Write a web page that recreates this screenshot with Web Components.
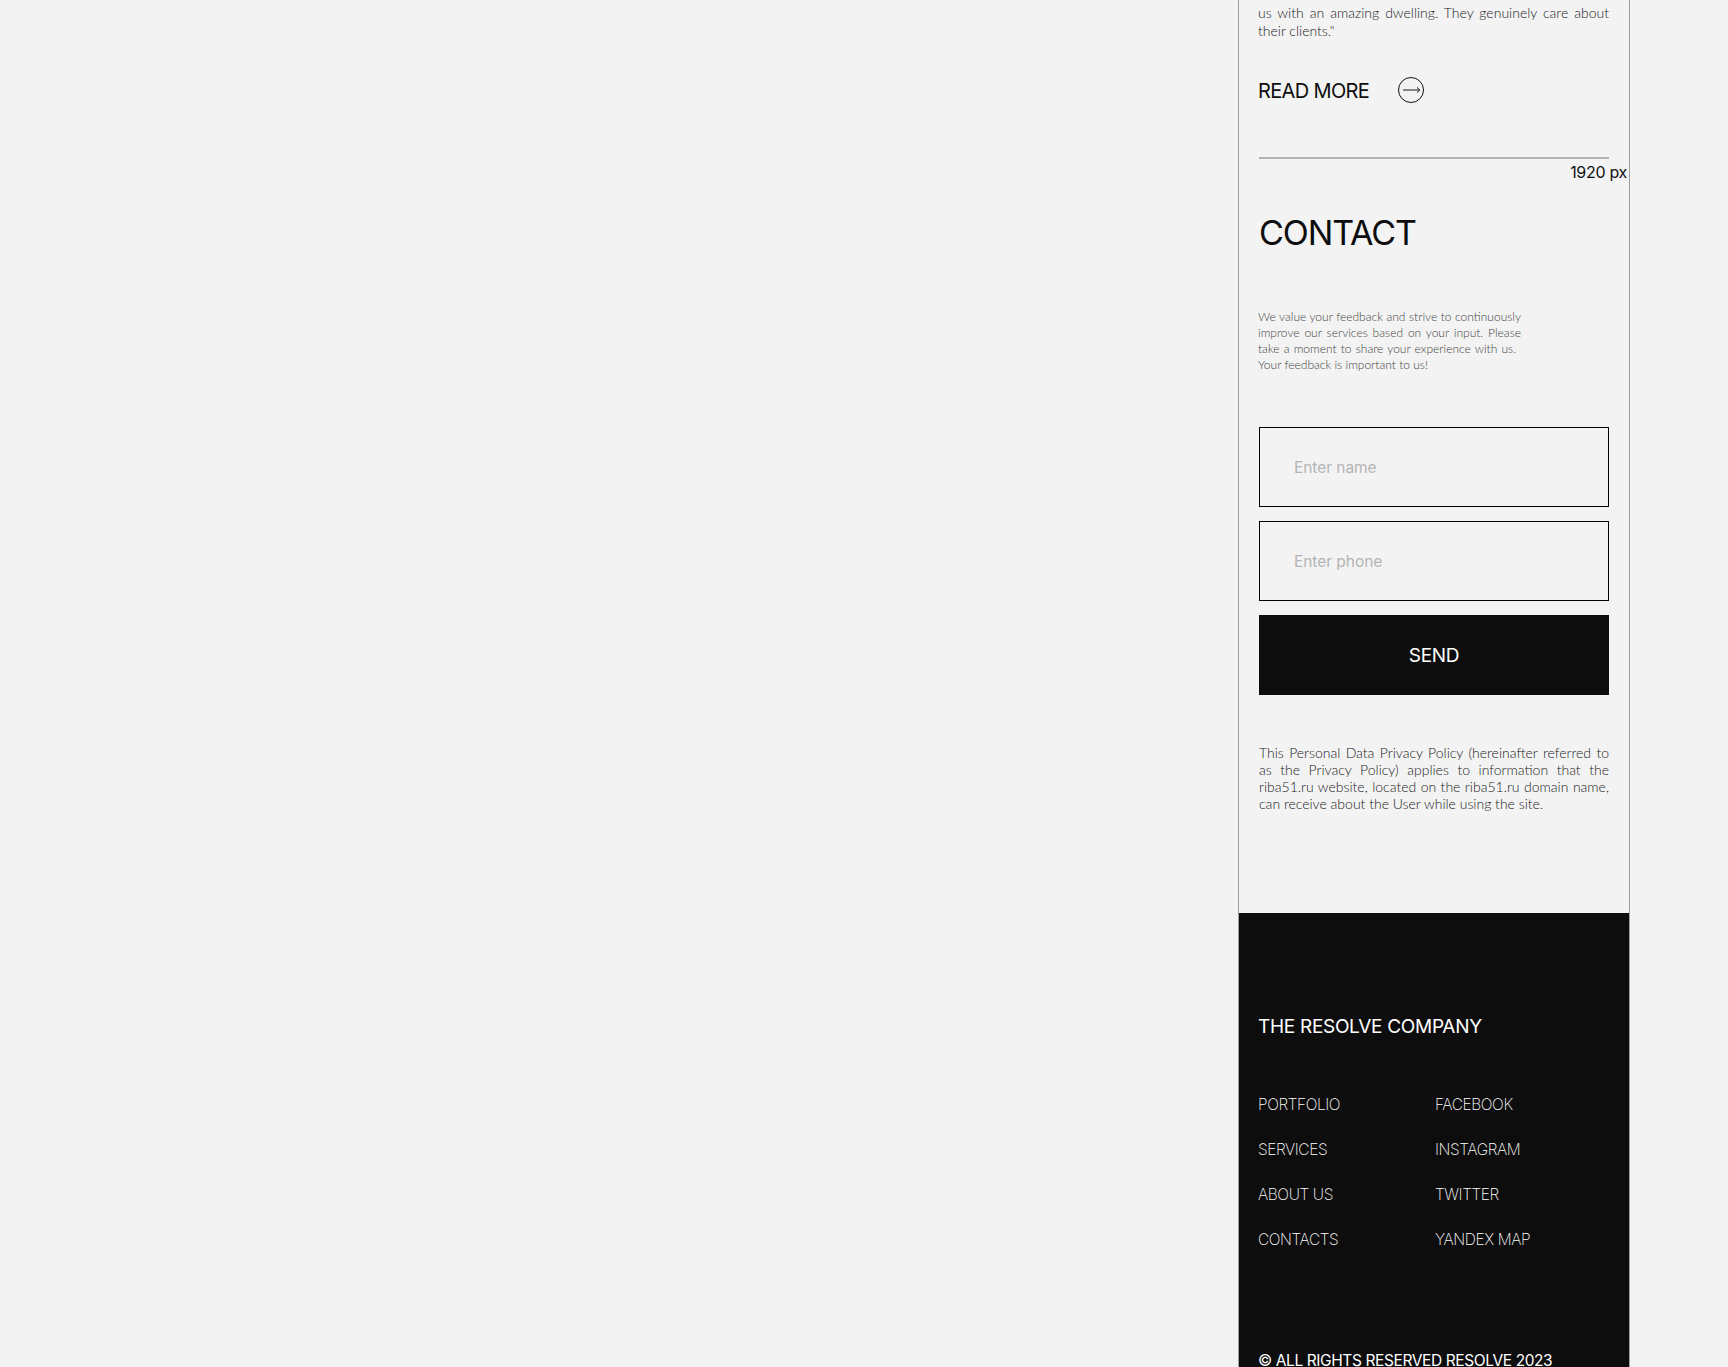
<!DOCTYPE html>
<html lang="en">
<head>
<meta charset="utf-8">
<title>Resolve contact</title>
<style>
  html, body { margin: 0; height: 1367px; overflow: hidden; background: #f3f3f3; }
  body { display: flex; justify-content: flex-end; padding-right: 98px; box-sizing: border-box; }
</style>
</head>
<body>
<resolve-page></resolve-page>

<template id="link-tpl">
  <style>
    :host { display: block; font: 200 15.5px/20px Inter, "Liberation Sans", sans-serif; letter-spacing: -0.4px; color: #fff; }
  </style>
  <slot></slot>
</template>

<script>
class ReadMore extends HTMLElement {
  constructor() {
    super();
    this.attachShadow({ mode: "open" });
    this.shadowRoot.innerHTML = `
      <style>
        :host { display: flex; align-items: center; gap: 29px; height: 26px; color: #0d0d0d;
          font: 400 20px/26px Inter, "Liberation Sans", sans-serif; letter-spacing: -0.65px; }
        span { padding-top: 2px; margin-left: -1px; }
        svg { display: block; }
      </style>
      <span>READ MORE</span>
      <svg width="26" height="26" viewBox="0 0 26 26" fill="none" stroke="#111" stroke-width="1">
        <circle cx="13" cy="13" r="12.5"/>
        <path d="M5 13H21.5" stroke="#555" stroke-width="1.4"/>
        <path d="M19 10.5l2.8 2.5-2.8 2.5"/>
      </svg>`;
  }
}

class ContactField extends HTMLElement {
  constructor() {
    super();
    this.attachShadow({ mode: "open" });
    this.shadowRoot.innerHTML = `
      <style>
        :host { display: flex; align-items: center; box-sizing: border-box; height: 80px; padding: 1px 0 0 34px;
          border: 1px solid #000; color: #b5b5b5; font: 400 15.5px/20px Inter, "Liberation Sans", sans-serif; letter-spacing: -0.05px; }
      </style>
      <slot></slot>`;
  }
}

class FooterLink extends HTMLElement {
  constructor() {
    super();
    this.attachShadow({ mode: "open" });
    this.shadowRoot.appendChild(document.getElementById("link-tpl").content.cloneNode(true));
  }
}

class SiteFooter extends HTMLElement {
  constructor() {
    super();
    this.attachShadow({ mode: "open" });
    this.shadowRoot.innerHTML = `
      <style>
        :host { display: block; background: #0d0d0d; color: #fff; padding: 100px 20px 0 19px; height: 454px; box-sizing: border-box; }
        .brand { font: 400 19px/28px Inter, "Liberation Sans", sans-serif; letter-spacing: -0.3px; }
        .links { display: grid; grid-template-columns: 177px 1fr; row-gap: 25px; margin-top: 54px; }
        .copy { margin-top: 101px; font: 400 15.5px/20px Inter, "Liberation Sans", sans-serif; letter-spacing: -0.4px; }
      </style>
      <div class="brand">THE RESOLVE COMPANY</div>
      <div class="links"><slot></slot></div>
      <div class="copy">© ALL RIGHTS RESERVED RESOLVE 2023</div>`;
  }
}

class ContactSection extends HTMLElement {
  constructor() {
    super();
    this.attachShadow({ mode: "open" });
    this.shadowRoot.innerHTML = `
      <style>
        :host { display: block; padding: 4px 20px 0; height: 913px; box-sizing: border-box; }
        .quote { margin: 0 0 0 -1px; font: 300 14px/18px Lato, "Liberation Sans", sans-serif; color: #222; text-align: justify; }
        read-more { margin-top: 37px; }
        hr { margin: 54px 0 0; border: 0; height: 2px; background: #b3b3b3; }
        .size { text-align: right; margin: 3px -18px 0 0; font: 400 16px/20px Inter, "Liberation Sans", sans-serif; letter-spacing: -0.3px; color: #111; }
        h2 { margin: 29px 0 0; font: 400 34px/44px Inter, "Liberation Sans", sans-serif; letter-spacing: -1.1px; color: #0d0d0d; }
        .lead { margin: 54px 0 0 -1px; width: 263px; font: 300 12px/16px Lato, "Liberation Sans", sans-serif; color: #444; }
        .lead span { display: block; text-align: justify; text-align-last: justify; }
        .lead span.l3 { width: 258px; }
        .lead span.l4 { text-align-last: left; }
        .form { display: flex; flex-direction: column; gap: 14px; margin-top: 54px; }
        .send { display: flex; align-items: center; justify-content: center; box-sizing: border-box; height: 80px; padding-top: 1px; background: #0d0d0d; color: #fff;
          font: 400 19px/24px Inter, "Liberation Sans", sans-serif; letter-spacing: -0.3px; }
        .policy { margin: 49px 0 0; font: 300 14px/17px Lato, "Liberation Sans", sans-serif; color: #222; text-align: justify; }
      </style>
      <p class="quote">us with an amazing dwelling. They genuinely care about their clients."</p>
      <read-more></read-more>
      <hr>
      <div class="size">1920 px</div>
      <h2>CONTACT</h2>
      <p class="lead"><span>We value your feedback and strive to continuously</span><span>improve our services based on your input. Please</span><span class="l3">take a moment to share your experience with us.</span><span class="l4">Your feedback is important to us!</span></p>
      <div class="form">
        <contact-field>Enter name</contact-field>
        <contact-field>Enter phone</contact-field>
        <div class="send">SEND</div>
      </div>
      <p class="policy">This Personal Data Privacy Policy (hereinafter referred to as the Privacy Policy) applies to information that the riba51.ru website, located on the riba51.ru domain name, can receive about the User while using the site.</p>`;
  }
}

class ResolvePage extends HTMLElement {
  constructor() {
    super();
    this.attachShadow({ mode: "open" });
    this.shadowRoot.innerHTML = `
      <style>
        :host { display: block; width: 392px; box-sizing: border-box; border: solid #a0a0a0; border-width: 0 1px; height: 1367px; overflow: hidden; }
      </style>
      <contact-section></contact-section>
      <site-footer>
        <footer-link>PORTFOLIO</footer-link><footer-link>FACEBOOK</footer-link>
        <footer-link>SERVICES</footer-link><footer-link>INSTAGRAM</footer-link>
        <footer-link>ABOUT US</footer-link><footer-link>TWITTER</footer-link>
        <footer-link>CONTACTS</footer-link><footer-link>YANDEX MAP</footer-link>
      </site-footer>`;
  }
}

customElements.define("read-more", ReadMore);
customElements.define("contact-field", ContactField);
customElements.define("footer-link", FooterLink);
customElements.define("site-footer", SiteFooter);
customElements.define("contact-section", ContactSection);
customElements.define("resolve-page", ResolvePage);
</script>
</body>
</html>
